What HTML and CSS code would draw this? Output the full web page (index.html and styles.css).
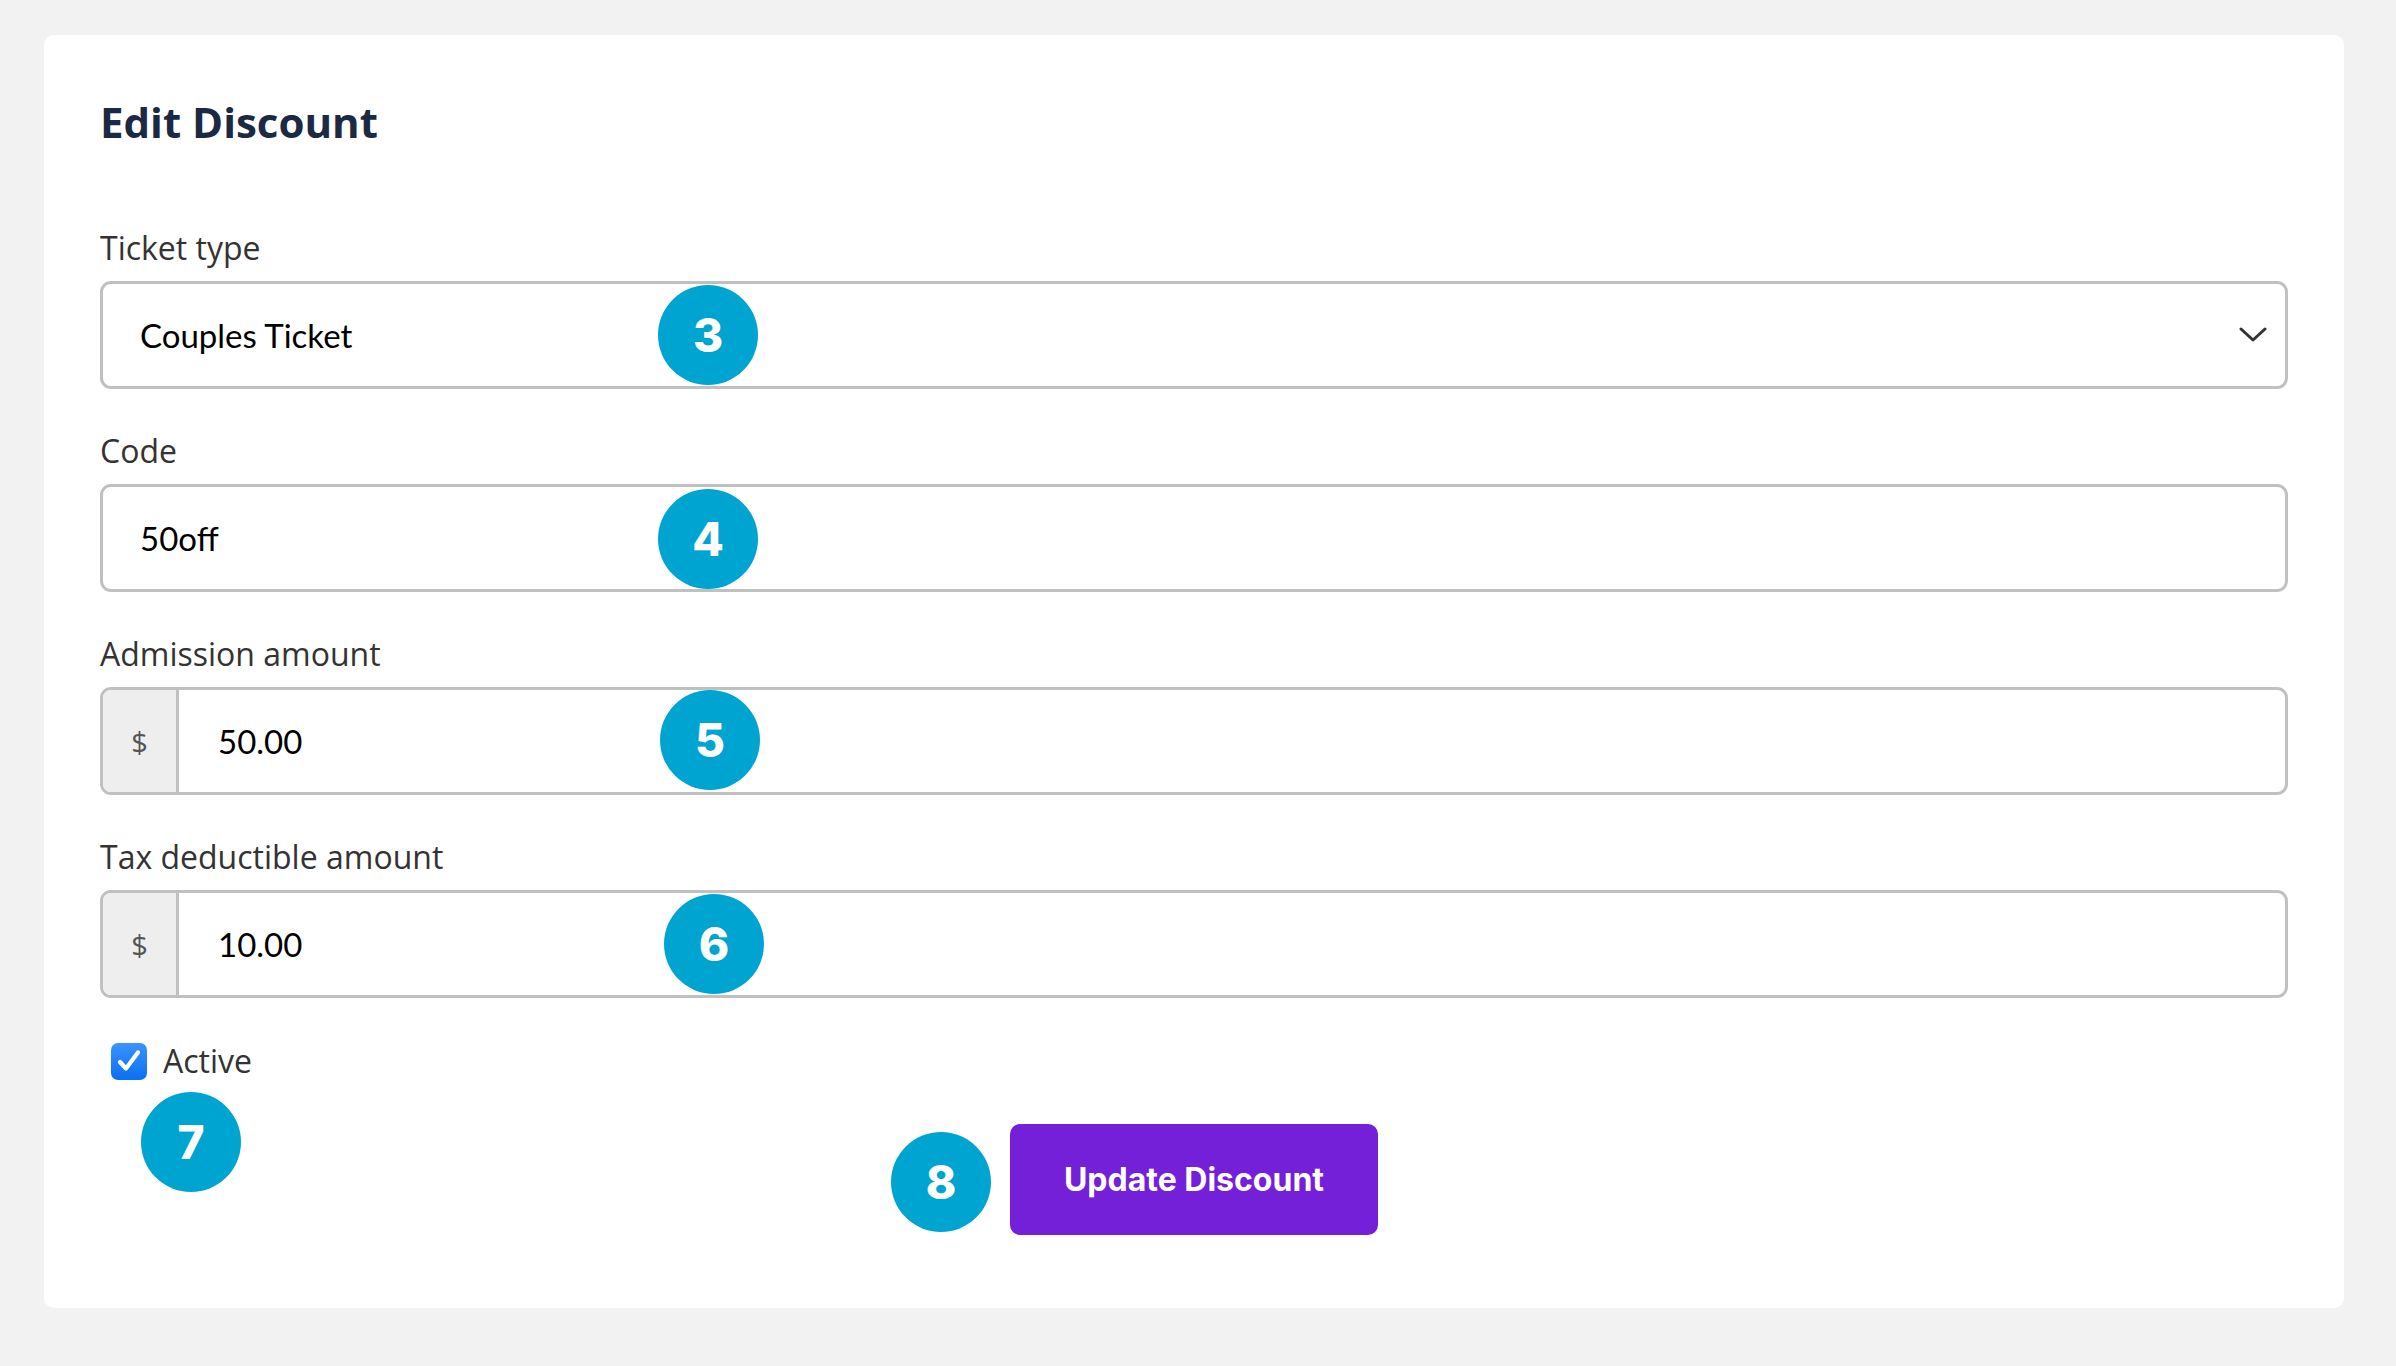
FILE: index.html
```html
<!DOCTYPE html>
<html lang="en">
<head>
<meta charset="utf-8">
<title>Edit Discount</title>
<link rel="stylesheet" href="styles.css">
</head>
<body>
<main class="card">
  <h1 class="title">Edit Discount</h1>

  <div class="field">
    <div class="label">Ticket type</div>
    <div class="control select">
      <span class="value">Couples Ticket</span>
      <svg class="chevron" width="28" height="16" viewBox="0 0 28 16"><path d="M2 2 L14 13 L26 2" fill="none" stroke="#333" stroke-width="3" stroke-linecap="round" stroke-linejoin="round"/></svg>
    </div>
  </div>

  <div class="field">
    <div class="label">Code</div>
    <div class="control">
      <span class="value">50off</span>
    </div>
  </div>

  <div class="field">
    <div class="label">Admission amount</div>
    <div class="control group">
      <span class="prefix">$</span>
      <span class="value">50.00</span>
    </div>
  </div>

  <div class="field">
    <div class="label">Tax deductible amount</div>
    <div class="control group">
      <span class="prefix">$</span>
      <span class="value">10.00</span>
    </div>
  </div>

  <label class="check">
    <span class="box">
      <svg width="28" height="28" viewBox="0 0 28 28"><path d="M5 15 L11 21.5 L23 5.5" fill="none" stroke="#fff" stroke-width="4.2" stroke-linecap="round" stroke-linejoin="round"/></svg>
    </span>
    <span class="check-text">Active</span>
  </label>

  <div class="actions">
    <button class="btn">Update Discount</button>
  </div>

  <span class="badge b3">3</span>
  <span class="badge b4">4</span>
  <span class="badge b5">5</span>
  <span class="badge b6">6</span>
  <span class="badge b7">7</span>
  <span class="badge b8">8</span>
</main>
</body>
</html>
```

FILE: styles.css
```css
* { box-sizing: border-box; }

html, body {
  margin: 0;
  padding: 0;
  background: #f2f2f2;
}

body {
  font-family: "Open Sans", "Liberation Sans", sans-serif;
  padding: 35px 52px 58px 44px;
}

.card {
  position: relative;
  width: 2300px;
  height: 1273px;
  background: #ffffff;
  border-radius: 10px;
  padding: 62px 56px 72px 56px;
  display: flex;
  flex-direction: column;
}

.title {
  margin: 0 0 76px 0;
  font-size: 42px;
  line-height: 50px;
  font-weight: 700;
  color: #1b2943;
}

.field {
  display: flex;
  flex-direction: column;
  gap: 11px;
  margin-bottom: 37px;
}

.label {
  font-size: 32px;
  line-height: 44px;
  padding-top: 3px;
  color: #333333;
}

.control {
  height: 108px;
  border: 3px solid #c0c0c0;
  border-radius: 11px;
  display: flex;
  align-items: center;
  padding-left: 37px;
  padding-right: 18px;
  background: #fff;
  overflow: hidden;
}

.value {
  font-family: Lato, "Noto Sans", sans-serif;
  font-size: 33px;
  color: #000;
  flex: 1;
}

.select .chevron {
  flex: none;
}

.group {
  padding-left: 0;
}

.group .prefix {
  width: 76px;
  align-self: stretch;
  display: flex;
  align-items: center;
  justify-content: center;
  background: #eeeeee;
  border-right: 3px solid #c0c0c0;
  font-size: 29px;
  color: #555;
  margin-right: 39px;
}

.check {
  display: flex;
  align-items: center;
  gap: 16px;
  margin-top: 4px;
  padding-left: 11px;
}

.check .box {
  width: 36px;
  height: 37px;
  border-radius: 7px;
  background: linear-gradient(#3a93ff, #0a70f2);
  display: flex;
  align-items: center;
  justify-content: center;
}

.check-text {
  font-size: 32px;
  line-height: 44px;
  color: #333;
}

.actions {
  display: flex;
  justify-content: center;
  margin-top: 41px;
}

.btn {
  width: 368px;
  height: 111px;
  border: none;
  border-radius: 10px;
  background: #7420d8;
  color: #fff;
  font-family: Inter, "Liberation Sans", sans-serif;
  font-weight: 700;
  font-size: 32px;
  padding: 0;
}

.badge {
  position: absolute;
  width: 100px;
  height: 100px;
  border-radius: 50%;
  background: #00a4d0;
  color: #fff;
  font-family: Inter, "Open Sans", sans-serif;
  font-weight: 800;
  font-size: 46px;
  display: flex;
  align-items: center;
  justify-content: center;
}

.b3 { left: 614px; top: 250px; }
.b4 { left: 614px; top: 454px; }
.b5 { left: 616px; top: 655px; }
.b6 { left: 620px; top: 859px; }
.b7 { left: 97px;  top: 1057px; }
.b8 { left: 847px; top: 1097px; }
```
